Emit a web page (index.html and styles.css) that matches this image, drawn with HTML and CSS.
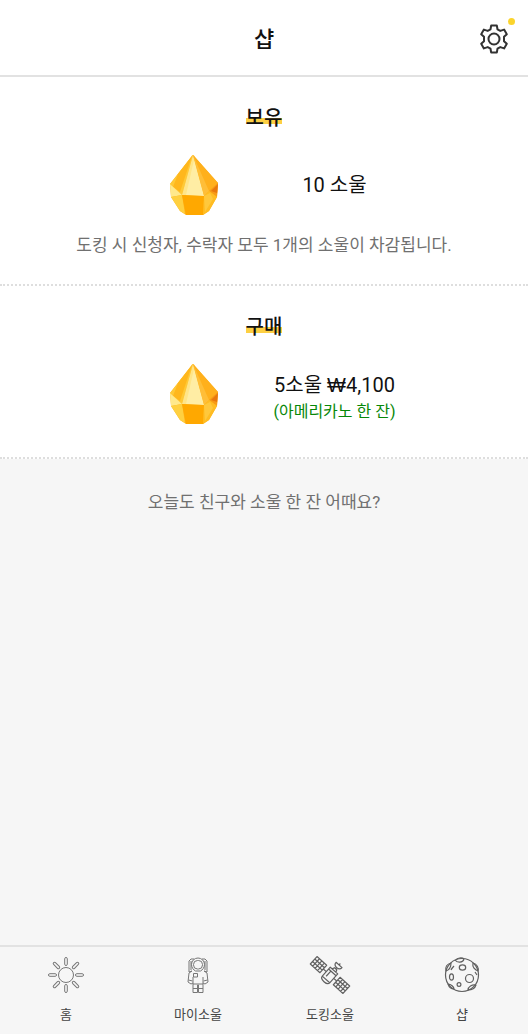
FILE: index.html
```html
<!DOCTYPE html>
<html lang="ko">
<head>
<meta charset="utf-8">
<meta name="viewport" content="width=device-width, initial-scale=1">
<title>샵</title>
<link rel="stylesheet" href="styles.css">
</head>
<body>
<svg class="defs" aria-hidden="true">
  <symbol id="gem" viewBox="0 0 50 62">
    <path fill="#ffb31a" d="M24 1Q25 1 26 3L49 29 48 43 40 57 34 61H17L11 57 2 43 1 30 22 3Q23 1 24 1z"/>
    <path fill="#ffc936" d="M24 1 1 30 13 41z"/>
    <path fill="#ffb71c" d="M23 2 9 20 4 33 11 38z"/>
    <path fill="#ffe588" d="M24 1 13 41 35 42z"/>
    <path fill="#ffeda4" d="M25 6 17 41 35 42z"/>
    <path fill="#ffb01c" d="M24 1 49 29 40 37z"/>
    <path fill="#ffbe38" d="M24 1 40 37 35 42z"/>
    <path fill="#f79a16" d="M49 29 40 37 48 43z"/>
    <path fill="#e9780d" d="M49 30 42 37 48 39z"/>
    <path fill="#ffe98c" d="M1 30 13 41 2 43z"/>
    <path fill="#ffd040" d="M2 43 13 41 16 60 11 57z"/>
    <path fill="#ffa800" d="M13 41 35 42 34 61H17z"/>
    <path fill="#ffbc22" d="M35 42 40 37 48 43 40 57 34 61z"/>
    <path fill="#ffc83c" d="M35 42 41 39 44 45 36 58z"/>
  </symbol>
</svg>
<div class="app">
  <header class="header">
    <h1 class="header-title">샵</h1>
    <button class="settings" type="button" aria-label="설정">
      <svg class="settings-icon" viewBox="0 0 30 30" aria-hidden="true">
        <path d="M12.200 1.500h5.600l.7 3.800 2.800 1.600 3.800-1.300 2.700 4.600-2.800 2.600v4.400l2.800 2.600-2.700 4.600-3.800-1.300-2.800 1.600-.7 3.800h-5.600l-.7-3.800-2.800-1.600-3.800 1.300-2.700-4.600 2.800-2.600v-4.400L2.200 10.200l2.700-4.600 3.800 1.300 2.800-1.600z"/>
        <circle cx="15" cy="15" r="5.500"/>
      </svg>
      <span class="settings-dot"></span>
    </button>
  </header>
  <main class="main">
    <section class="panel">
      <h2 class="panel-title">보유</h2>
      <div class="item">
        <svg class="gem" aria-hidden="true"><use href="#gem"/></svg>
        <p class="amount">10 소울</p>
      </div>
      <p class="notice">도킹 시 신청자, 수락자 모두 1개의 소울이 차감됩니다.</p>
    </section>
    <section class="panel">
      <h2 class="panel-title">구매</h2>
      <button class="item" type="button">
        <svg class="gem" aria-hidden="true"><use href="#gem"/></svg>
        <span class="offer">
          <span class="amount">5소울 <span class="won">₩</span>4,100</span>
          <span class="offer-note">(아메리카노 한 잔)</span>
        </span>
      </button>
    </section>
    <p class="closing">오늘도 친구와 소울 한 잔 어때요?</p>
  </main>
  <nav class="tabs">
    <a class="tab" href="#home">
      <svg class="tab-icon" viewBox="0 0 36 36" aria-hidden="true">
        <circle cx="18" cy="18" r="7.500"/>
        <g id="rays">
          <rect x="16.700" y=".5" width="2.600" height="8" rx="1.300"/>
          <rect x="16.700" y="27.500" width="2.600" height="8" rx="1.300"/>
          <rect x=".5" y="16.700" width="8" height="2.600" rx="1.300"/>
          <rect x="27.500" y="16.700" width="8" height="2.600" rx="1.300"/>
        </g>
        <use href="#rays" transform="rotate(45 18 18)"/>
      </svg>
      <span>홈</span>
    </a>
    <a class="tab" href="#my">
      <svg class="tab-icon" viewBox="0 0 36 36" aria-hidden="true">
        <path d="M12 14 9 15V4l2-2h3m8 0h3l2 2v11l-3-1M11 4v9m14-9v9"/>
        <path d="M11.500 7.500a6.500 6.500 0 0 1 13 0c0 3-2 5.500-4 6.500h-5c-2-1-4-3.500-4-6.500z"/>
        <rect x="13.500" y="3.500" width="9" height="8.500" rx="4"/>
        <path d="M12 14 9 16 8 25l3 2 2-1m11-12 3 2 1 9-3 2-2-1M13 20v15.500h4.500V28h1v7.500H23V20M13 27h10M13 31.500h4.500m1 0H23M8.500 23l4 1m11 0 4-1"/>
        <path d="M13.500 16.500h4V20h-4z"/>
      </svg>
      <span>마이소울</span>
    </a>
    <a class="tab" href="#docking">
      <svg class="tab-icon tab-icon-bold" viewBox="0 0 36 36" aria-hidden="true">
        <g transform="rotate(42 18 18)">
          <path d="M-4 13H9v10H-4zM-.700 13v10M2.500 13v10M5.800 13v10M-4 16.300H9M-4 19.600H9"/>
          <path d="M27 13h13v10H27zM30.300 13v10M33.500 13v10M36.800 13v10M27 16.300h13M27 19.600h13"/>
          <path d="M9 18h4m10 0h4M13 12h10v12H13zM13 14.500h10M16 14.500v7M13 24c0 4 10 4 10 0zM15.500 12l1-2.500h3l1 2.500M18 9.500V8M14 4.500c0 4.700 8 4.700 8 0zM18 4.500v-2"/>
        </g>
      </svg>
      <span>도킹소울</span>
    </a>
    <a class="tab" href="#shop" aria-current="page">
      <svg class="tab-icon tab-icon-bold" viewBox="0 0 36 36" aria-hidden="true">
        <circle cx="18" cy="18" r="16.500"/>
        <ellipse cx="18.500" cy="10.500" rx="3.200" ry="2.600"/>
        <ellipse cx="7.500" cy="20" rx="2" ry="3.200"/>
        <circle cx="25.500" cy="21.500" r="4"/>
        <circle cx="15" cy="27.500" r="1.900"/>
        <path d="M11 3c2 3 8 3 9-1M12 3c1-2 6-3 8-1M2 14c-1-4 1-7 5-8 0 4-2 7-5 8zM7 13c1-2 2-3 3-4M29 6c4 1 6 5 5 8-3-1-6-4-5-8zM31 15l2 3M24 33c0-3 4-6 8-5-1 3-4 5-8 5zM4 27c3 0 6 3 6 5-3 0-5-2-6-5z"/>
      </svg>
      <span>샵</span>
    </a>
  </nav>
</div>
</body>
</html>
```
FILE: styles.css
```css
* {
  box-sizing: border-box;
}

body {
  margin: 0;
  background: #f6f6f6;
  color: #111;
  font-family: Roboto, "Noto Sans CJK KR", sans-serif;
}

h1,
h2,
p {
  margin: 0;
}

button {
  padding: 0;
  border: 0;
  background: none;
  color: inherit;
  font: inherit;
  cursor: pointer;
}

.defs {
  display: none;
}

.app {
  display: flex;
  flex-direction: column;
  min-height: 100vh;
}

.header {
  display: grid;
  grid-template-columns: 1fr auto 1fr;
  align-items: start;
  padding: 24px 19px 19px;
  border-bottom: 2px solid #e2e2e2;
  background: #fff;
}

.header-title {
  grid-column: 2;
  font-size: 22px;
  font-weight: 500;
  line-height: 32px;
}

.settings {
  position: relative;
  justify-self: end;
  width: 30px;
  height: 30px;
}

.settings-icon {
  display: block;
  width: 30px;
  height: 30px;
  fill: none;
  stroke: #333;
  stroke-width: 2;
  stroke-linejoin: round;
}

.settings-dot {
  position: absolute;
  top: -6px;
  right: -6px;
  width: 7px;
  height: 7px;
  border-radius: 50%;
  background: #fbd42c;
}

.main {
  flex: 1;
}

.panel {
  display: flex;
  flex-direction: column;
  align-items: center;
  padding: 26px 16px;
  border-bottom: 2px dotted #dedede;
  background: #fff;
}

.panel-title {
  background: linear-gradient(transparent 50%, #fdd043 50%, #fdd043 70%, transparent 70%);
  font-size: 20px;
  font-weight: 500;
  line-height: 30px;
}

.item {
  display: grid;
  grid-template-columns: 1fr 1fr;
  align-items: center;
  justify-items: center;
  width: 282px;
  max-width: 100%;
  min-height: 66px;
  margin-top: 19px;
}

.gem {
  width: 50px;
  height: 62px;
}

.amount {
  font-size: 20px;
  line-height: 28px;
  white-space: nowrap;
}

.won {
  font-family: "Liberation Sans", sans-serif;
}

.offer {
  display: flex;
  flex-direction: column;
  align-items: center;
  padding-top: 8px;
}

.offer-note {
  color: #078707;
  font-size: 16px;
  line-height: 26px;
  white-space: nowrap;
}

.notice,
.closing {
  color: #707070;
  font-size: 17px;
  line-height: 26px;
  text-align: center;
}

.notice {
  margin-top: 14px;
}

.item:last-child {
  margin-bottom: 4px;
}

.closing {
  padding: 30px 16px;
}

.tabs {
  display: grid;
  grid-template-columns: repeat(4, 1fr);
  border-top: 2px solid #e2e2e2;
}

.tab {
  display: flex;
  flex-direction: column;
  align-items: center;
  gap: 12px;
  padding: 10px 0 9px;
  color: #444;
  font-size: 13px;
  line-height: 20px;
  text-decoration: none;
}

.tab-icon {
  width: 36px;
  height: 36px;
  overflow: visible;
  fill: none;
  stroke: #777;
  stroke-width: 1;
  stroke-linejoin: round;
}

.tab-icon-bold {
  stroke: #606060;
  stroke-width: 1.2;
}
```
